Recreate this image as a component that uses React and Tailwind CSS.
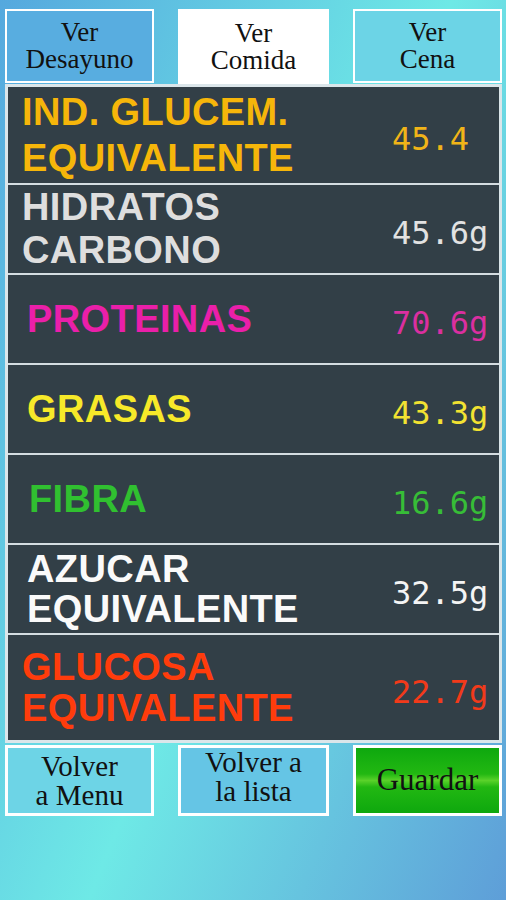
const rows = [
  { label: ["IND. GLUCEM.", "EQUIVALENTE"], value: "45.4", h: "h-[96px]", lead: "leading-[46px]", pl: "pl-[14px]", color: "text-[#f6b60a]", vcolor: "text-[#f1b418]" },
  { label: ["HIDRATOS", "CARBONO"], value: "45.6g", h: "h-[88px]", lead: "leading-[43px]", pl: "pl-[14px]", color: "text-[#dedede]", vcolor: "text-[#e2e2e2]" },
  { label: ["PROTEINAS"], value: "70.6g", h: "h-[88px]", lead: "leading-[42px]", pl: "pl-[19px]", color: "text-[#ea1fa9]", vcolor: "text-[#db2fa0]" },
  { label: ["GRASAS"], value: "43.3g", h: "h-[88px]", lead: "leading-[42px]", pl: "pl-[19px]", color: "text-[#f7e929]", vcolor: "text-[#f2e232]" },
  { label: ["FIBRA"], value: "16.6g", h: "h-[88px]", lead: "leading-[42px]", pl: "pl-[21px]", color: "text-[#30c030]", vcolor: "text-[#37bd37]" },
  { label: ["AZUCAR", "EQUIVALENTE"], value: "32.5g", h: "h-[88px]", lead: "leading-[40px]", pl: "pl-[19px]", color: "text-[#fafafa]", vcolor: "text-[#f4f4f4]" },
  { label: ["GLUCOSA", "EQUIVALENTE"], value: "22.7g", h: "h-[105px]", lead: "leading-[41px]", pl: "pl-[14px]", color: "text-[#ff3c0c]", vcolor: "text-[#f23a1a]" },
];

function App() {
  return (
    <div className="w-full h-[900px] pl-[5px] pr-[4px] pt-[9px] bg-[linear-gradient(112deg,#55a8de_0%,#6ee9e6_52%,#5e9ed8_100%)] font-['Liberation_Serif',serif] text-[#111]">
      {/* Top tabs */}
      <div className="flex justify-between items-end h-[75px]">
        <div className="w-[149px] h-[74px] mb-[1px] border-2 border-white bg-[#58ade0] flex flex-col items-center justify-center text-[27px] leading-[27px]">
          <span>Ver</span>
          <span>Desayuno</span>
        </div>
        <div className="w-[151px] h-[75px] bg-white flex flex-col items-center justify-center text-[27px] leading-[27px]">
          <span>Ver</span>
          <span>Comida</span>
        </div>
        <div className="w-[149px] h-[74px] mb-[1px] border-2 border-white bg-[#6cd4e6] flex flex-col items-center justify-center text-[27px] leading-[27px]">
          <span>Ver</span>
          <span>Cena</span>
        </div>
      </div>

      {/* Nutrient table */}
      <div className="border-[3px] border-[#dbe6ea] bg-[#d4dde1] flex flex-col gap-[2px]">
        {rows.map((r) => (
          <div key={r.value} className={`${r.h} bg-[#323f47] flex items-center`}>
            <div className={`flex-1 ${r.pl} font-['Liberation_Sans',sans-serif] font-bold tracking-[0.4px] text-[38px] ${r.lead} ${r.color}`}>
              {r.label.map((l) => (
                <div key={l}>{l}</div>
              ))}
            </div>
            <div className={`w-[107px] pt-[8px] font-['DejaVu_Sans_Mono',monospace] text-[32px] ${r.vcolor}`}>
              {r.value}
            </div>
          </div>
        ))}
      </div>

      {/* Bottom buttons */}
      <div className="flex justify-between mt-[2px]">
        <div className="w-[149px] h-[71px] border-[3px] border-white bg-[#6dd4e6] flex flex-col items-center justify-center text-[29px] leading-[29px]">
          <span>Volver</span>
          <span>a Menu</span>
        </div>
        <div className="w-[151px] h-[71px] border-[3px] border-white bg-[#65c5e5] flex flex-col items-center justify-start text-[29px] leading-[29px]">
          <span>Volver a</span>
          <span>la lista</span>
        </div>
        <div className="w-[149px] h-[71px] border-[3px] border-white bg-[linear-gradient(180deg,#0ea80e_0%,#22b812_40%,#5ad22a_50%,#22b812_60%,#0ea80e_100%)] flex items-center justify-center text-[31px]">
          Guardar
        </div>
      </div>
    </div>
  );
}

export default App;
